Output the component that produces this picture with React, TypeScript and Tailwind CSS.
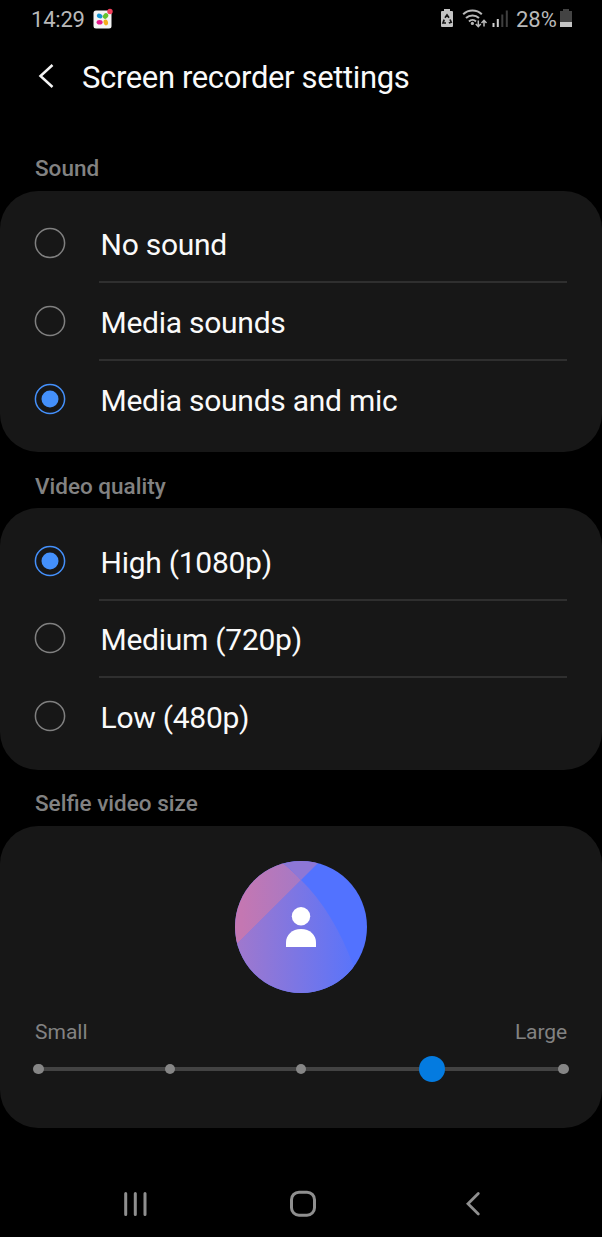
import { useState } from "react";

const soundOptions = ["No sound", "Media sounds", "Media sounds and mic"];
const qualityOptions = ["High (1080p)", "Medium (720p)", "Low (480p)"];
const sizeSteps = [0, 1, 2, 3, 4];

function StatusBar() {
    return (
        <div className="flex h-[38px] items-center justify-between pl-[31px] pr-[29px] text-[#b9b9b9]">
            <div className="flex items-center gap-2">
                <span className="w-[54px] whitespace-nowrap pt-px text-[22px] leading-[38px] tracking-[-0.2px]">14:29</span>
                <svg width="21" height="22" viewBox="0 0 21 22">
                    <rect x="0.5" y="2.5" width="18" height="18" rx="2.5" fill="#f4f4f4" />
                    <ellipse cx="6.7" cy="8" rx="2.9" ry="2.3" fill="#1494d2" transform="rotate(25 6.7 8)" />
                    <ellipse cx="12.6" cy="8" rx="2.4" ry="3" fill="#63c32e" transform="rotate(40 12.6 8)" />
                    <ellipse cx="6.6" cy="14.2" rx="3" ry="2.3" fill="#e5188c" />
                    <ellipse cx="12.8" cy="14.4" rx="2.2" ry="3" fill="#f5ad1b" transform="rotate(-15 12.8 14.4)" />
                    <circle cx="17" cy="3.5" r="2.7" fill="#f23f5b" />
                </svg>
            </div>
            <div className="flex items-center">
                <svg width="14" height="20" viewBox="0 0 14 20" className="mr-[8px]">
                    <path d="M4 0h6v2h2a1 1 0 0 1 1 1v14a1 1 0 0 1-1 1H2a1 1 0 0 1-1-1V3a1 1 0 0 1 1-1h2z" fill="#c4c4c4" />
                    <path d="M5 8.8 7 6l2 2.8M10 10.5l1.2 2.7-2.4.8M6 14H3l1.2-3.4" fill="none" stroke="#161616" strokeWidth="1.7" />
                </svg>
                <svg width="26" height="20" viewBox="0 0 26 20" className="mr-[4px]">
                    <g fill="none" stroke="#b9b9b9" strokeWidth="2">
                        <path d="M1.2 5.3a13.5 13.5 0 0 1 18.6 0" />
                        <path d="M4 9a9.4 9.4 0 0 1 13 0" />
                        <path d="M7 12.5a5 5 0 0 1 7 0" />
                        <path d="M16.3 11.5v6M13.8 15l2.5 2.7 2.5-2.7M22 17.5v-6M19.5 14l2.5-2.7 2.5 2.7" strokeWidth="1.5" />
                    </g>
                    <circle cx="10.4" cy="14.4" r="1.6" fill="#b9b9b9" />
                </svg>
                <svg width="17" height="20" viewBox="0 0 17 20" className="mr-[7px]">
                    <rect x="0.5" y="14" width="2" height="4" fill="#d0d0d0" />
                    <rect x="4.8" y="10" width="2" height="8" fill="#d0d0d0" />
                    <rect x="9.3" y="5.5" width="2" height="12.5" fill="#3f3f3f" />
                    <rect x="13.8" y="1.5" width="2" height="16.5" fill="#3f3f3f" />
                </svg>
                <span className="w-[41px] whitespace-nowrap pt-px text-[22px] leading-[38px]">28%</span>
                <svg width="14" height="20" viewBox="0 0 14 20" className="ml-[2px]">
                    <path d="M4 0h6v2h3v16H1V2h3z" fill="#434343" />
                    <rect x="1" y="13" width="12" height="5" fill="#c4c4c4" />
                </svg>
            </div>
        </div>
    );
}

function Radio({ checked }: { checked: boolean }) {
    return (
        <svg width="32" height="32" viewBox="0 0 32 32" className="mb-[2px] shrink-0">
            <circle cx="16" cy="16" r="14.6" fill="none" stroke={checked ? "#4490fb" : "#808080"} strokeWidth="1.5" />
            {checked && <circle cx="16" cy="16" r="8.5" fill="#4490fb" />}
        </svg>
    );
}

function RadioCard({ title, options, initial }: { title: string; options: string[]; initial: number }) {
    const [selected, setSelected] = useState(initial);

    return (
        <section>
            <SectionTitle>{title}</SectionTitle>
            <div className="rounded-[38px] bg-[#171717] pt-[14.5px] pb-[13.5px]">
                {options.map((label, i) => (
                    <button
                        key={label}
                        onClick={() => setSelected(i)}
                        className="flex h-[77.75px] w-full items-center pl-[34px] pr-[35px] text-left"
                    >
                        <Radio checked={selected === i} />
                        <span
                            className={
                                "ml-[33px] flex h-full flex-1 items-center border-b-2 pt-[3px] pl-[1.5px] text-[30px] tracking-[-0.26px] text-[#fafafa] " +
                                (i < options.length - 1 ? "border-[#2f2f2f]" : "border-transparent")
                            }
                        >
                            {label}
                        </span>
                    </button>
                ))}
            </div>
        </section>
    );
}

function SectionTitle({ children }: { children: string }) {
    return (
        <h2 className="flex h-[56.25px] items-end pb-[7.5px] pl-[35px] text-[22.5px] leading-[30px] font-medium text-[#828282]">
            {children}
        </h2>
    );
}

function Avatar() {
    return (
        <svg width="132" height="132" viewBox="0 0 132 132" className="mx-auto block">
            <defs>
                <clipPath id="disc">
                    <circle cx="66" cy="66" r="66" />
                </clipPath>
                <linearGradient id="pink" gradientUnits="userSpaceOnUse" x1="0" y1="0" x2="66" y2="0">
                    <stop offset="0.1" stopColor="#c477b2" />
                    <stop offset="1" stopColor="#a679c5" />
                </linearGradient>
                <linearGradient id="lavender" gradientUnits="userSpaceOnUse" x1="0" y1="0" x2="125" y2="0">
                    <stop offset="0" stopColor="#a178cc" />
                    <stop offset="1" stopColor="#5674fc" />
                </linearGradient>
            </defs>
            <g clipPath="url(#disc)">
                <rect width="132" height="132" fill="#5272ff" />
                <path d="M-10 95 66 19Q98 50 119 106L128 140H-10z" fill="url(#lavender)" />
                <path d="M-10 95 66 19Q58 10 44-1H-10z" fill="url(#pink)" />
                <path d="M66 19Q58 10 44-1H86z" fill="#8d77d6" />
            </g>
            <circle cx="66" cy="55.2" r="9.2" fill="#fff" />
            <path d="M51 86V81.5C51 74 57 68 66 68s15 6 15 13.5V86z" fill="#fff" />
        </svg>
    );
}

function SelfieSize() {
    const [size, setSize] = useState(3);

    return (
        <section>
            <SectionTitle>Selfie video size</SectionTitle>
            <div className="h-[302.5px] rounded-[38px] bg-[#171717] px-[33px] pt-[35px]">
                <Avatar />
                <div className="mt-[24px] flex justify-between px-[2px] text-[21px] leading-[30px] text-[#828282]">
                    <span>Small</span>
                    <span className="tracking-[-0.1px]">Large</span>
                </div>
                <div className="relative mt-[9px] flex h-[26px] items-center justify-between">
                    <div className="absolute inset-x-[6px] h-[4.5px] bg-[#434343]" />
                    {sizeSteps.map((step) => (
                        <button key={step} onClick={() => setSize(step)} className="relative flex size-[11px] items-center justify-center">
                            <span
                                className={
                                    step === size
                                        ? "size-[26px] shrink-0 rounded-full bg-[#047be0]"
                                        : "size-[10.5px] shrink-0 rounded-full bg-[#868686]"
                                }
                            />
                        </button>
                    ))}
                </div>
            </div>
        </section>
    );
}

function NavBar() {
    return (
        <nav className="flex h-[67px] items-center justify-between pl-[121px] pr-[121.5px]">
            <svg width="28" height="28" viewBox="0 0 28 28" fill="none" stroke="#8f8f8f" strokeWidth="3" strokeLinecap="round">
                <path d="M4.7 3.5v21M14.3 3.5v21M24 3.5v21" />
            </svg>
            <svg width="28" height="28" viewBox="0 0 28 28" fill="none" stroke="#8f8f8f" strokeWidth="3" className="-ml-[5px]">
                <rect x="2.5" y="2.2" width="23" height="23" rx="7.5" />
            </svg>
            <svg width="18" height="28" viewBox="0 0 18 28" fill="none" stroke="#8f8f8f" strokeWidth="2.8" strokeLinecap="round">
                <path d="M15.3 3.4 5 13.7l10.3 10.3" />
            </svg>
        </nav>
    );
}

export default function App() {
    return (
        <div className="flex h-[1237px] w-[602px] flex-col overflow-hidden bg-black font-[Roboto,sans-serif]">
            <StatusBar />
            <header className="flex h-[76px] items-center pl-[36px]">
                <svg width="20" height="28" viewBox="0 0 20 28" fill="none" stroke="#f4f4f4" strokeWidth="2.5">
                    <path d="M16.5 3 4.5 14l12 11" />
                </svg>
                <h1 className="ml-[26px] pt-[4px] text-[31px] tracking-[-0.37px] text-[#fafafa]">Screen recorder settings</h1>
            </header>
            <main className="mt-[20.5px] flex-1">
                <RadioCard title="Sound" options={soundOptions} initial={2} />
                <RadioCard title="Video quality" options={qualityOptions} initial={0} />
                <SelfieSize />
            </main>
            <NavBar />
        </div>
    );
}
